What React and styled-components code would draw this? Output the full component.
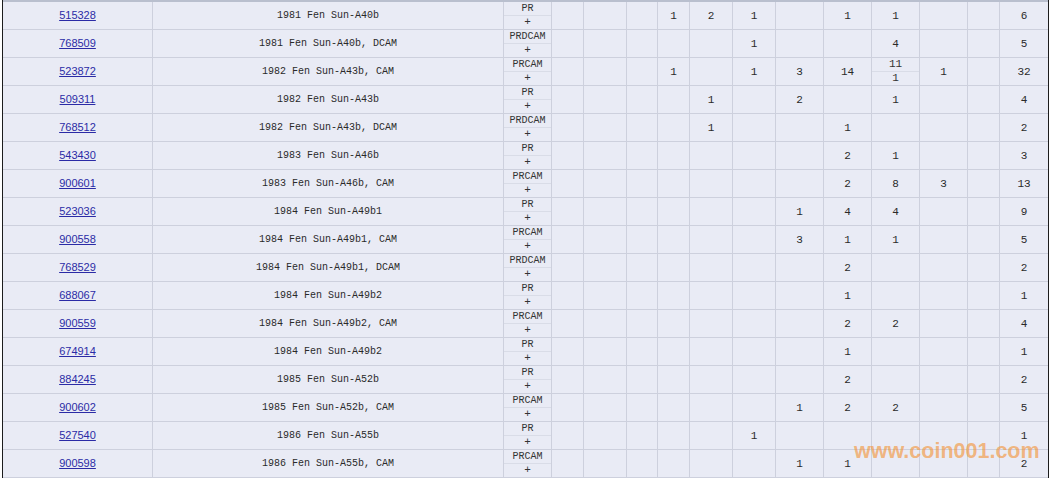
import React from 'react'
import styled, {createGlobalStyle} from 'styled-components'

const GlobalStyle = createGlobalStyle`
    html, body {
        margin: 0;
        padding: 0;
        background: #ffffff;
    }
`

const Frame = styled.div`
    position: relative;
    width: 1045px;
    margin-left: 2px;
    border-left: 1px solid #1c1c1c;
    border-right: 1px solid #1c1c1c;
    background: #e9ebf5;
    overflow: hidden;
`

const Grid = styled.table`
    width: 1045px;
    table-layout: fixed;
    border-collapse: separate;
    border-spacing: 0;
    border-top: 2px solid #b9bfce;
    color: #2a2a2a;
`

const Cell = styled.td`
    height: 27px;
    padding: 0;
    box-sizing: border-box;
    border-bottom: 1px solid #cdd0dd;
    border-right: ${p => (p.$last ? 'none' : '1px solid #cdd0dd')};
    text-align: center;
    vertical-align: middle;
    font-family: "Liberation Mono", monospace;
    font-size: ${p => (p.$small ? '10px' : '11px')};
    white-space: pre;
`

const IdLink = styled.a`
    font-family: "Liberation Sans", Arial, sans-serif;
    font-size: 11px;
    color: #2b2ba6;
    text-decoration: underline;
`

const Split = styled.div`
    display: flex;
    flex-direction: column;
    height: 27px;
`

const Half = styled.div`
    flex: 1;
    display: flex;
    align-items: center;
    justify-content: center;
    font-family: "Liberation Mono", monospace;
    font-size: ${p => (p.$tiny ? '10px' : '11px')};
    line-height: 1;
    color: #333;
    & + & {
        border-top: 1px solid #d9dce7;
    }
`

const Mark = styled.div`
    position: absolute;
    left: 851px;
    top: 439px;
    font-family: "Liberation Sans", Arial, sans-serif;
    font-weight: bold;
    font-size: 21.5px;
    color: rgba(243, 150, 60, 0.65);
    pointer-events: none;
`

const widths = [150, 351, 48, 32, 43, 31, 32, 43, 43, 48, 48, 48, 48, 32, 48]

const rows = [
    {id: '515328', name: '1981 Fen Sun-A40b', pr: 'PR', v: {4: '1', 5: '2', 6: '1', 8: '1', 9: '1'}, total: '6'},
    {id: '768509', name: '1981 Fen Sun-A40b, DCAM', pr: 'PRDCAM', v: {6: '1', 9: '4'}, total: '5'},
    {id: '523872', name: '1982 Fen Sun-A43b, CAM', pr: 'PRCAM', v: {4: '1', 6: '1', 7: '3', 8: '14', 9: ['11', '1'], 10: '1'}, total: '32'},
    {id: '509311', name: '1982 Fen Sun-A43b', pr: 'PR', v: {5: '1', 7: '2', 9: '1'}, total: '4'},
    {id: '768512', name: '1982 Fen Sun-A43b, DCAM', pr: 'PRDCAM', v: {5: '1', 8: '1'}, total: '2'},
    {id: '543430', name: '1983 Fen Sun-A46b', pr: 'PR', v: {8: '2', 9: '1'}, total: '3'},
    {id: '900601', name: '1983 Fen Sun-A46b, CAM', pr: 'PRCAM', v: {8: '2', 9: '8', 10: '3'}, total: '13'},
    {id: '523036', name: '1984 Fen Sun-A49b1', pr: 'PR', v: {7: '1', 8: '4', 9: '4'}, total: '9'},
    {id: '900558', name: '1984 Fen Sun-A49b1, CAM', pr: 'PRCAM', v: {7: '3', 8: '1', 9: '1'}, total: '5'},
    {id: '768529', name: '1984 Fen Sun-A49b1, DCAM', pr: 'PRDCAM', v: {8: '2'}, total: '2'},
    {id: '688067', name: '1984 Fen Sun-A49b2', pr: 'PR', v: {8: '1'}, total: '1'},
    {id: '900559', name: '1984 Fen Sun-A49b2, CAM', pr: 'PRCAM', v: {8: '2', 9: '2'}, total: '4'},
    {id: '674914', name: '1984 Fen Sun-A49b2', pr: 'PR', v: {8: '1'}, total: '1'},
    {id: '884245', name: '1985 Fen Sun-A52b', pr: 'PR', v: {8: '2'}, total: '2'},
    {id: '900602', name: '1985 Fen Sun-A52b, CAM', pr: 'PRCAM', v: {7: '1', 8: '2', 9: '2'}, total: '5'},
    {id: '527540', name: '1986 Fen Sun-A55b', pr: 'PR', v: {6: '1'}, total: '1'},
    {id: '900598', name: '1986 Fen Sun-A55b, CAM', pr: 'PRCAM', v: {7: '1', 8: '1'}, total: '2'},
]

const slots = [1, 2, 3, 4, 5, 6, 7, 8, 9, 10, 11]

function Value({val}) {
    if (Array.isArray(val)) {
        return <Split>
            <Half>{val[0]}</Half>
            <Half>{val[1]}</Half>
        </Split>
    }
    return val || null
}

export default function App() {
    return <>
        <GlobalStyle />
        <Frame>
            <Grid>
                <colgroup>
                    {widths.map((w, i) => <col key={i} style={{width: w}} />)}
                </colgroup>
                <tbody>
                    {rows.map(r => (
                        <tr key={r.id}>
                            <Cell><IdLink href="#">{r.id}</IdLink></Cell>
                            <Cell $small>{r.name}</Cell>
                            <Cell>
                                <Split>
                                    <Half $tiny>{r.pr}</Half>
                                    <Half>+</Half>
                                </Split>
                            </Cell>
                            {slots.map(s => (
                                <Cell key={s}><Value val={r.v[s]} /></Cell>
                            ))}
                            <Cell $last>{r.total}</Cell>
                        </tr>
                    ))}
                </tbody>
            </Grid>
            <Mark>www.coin001.com</Mark>
        </Frame>
    </>
}
